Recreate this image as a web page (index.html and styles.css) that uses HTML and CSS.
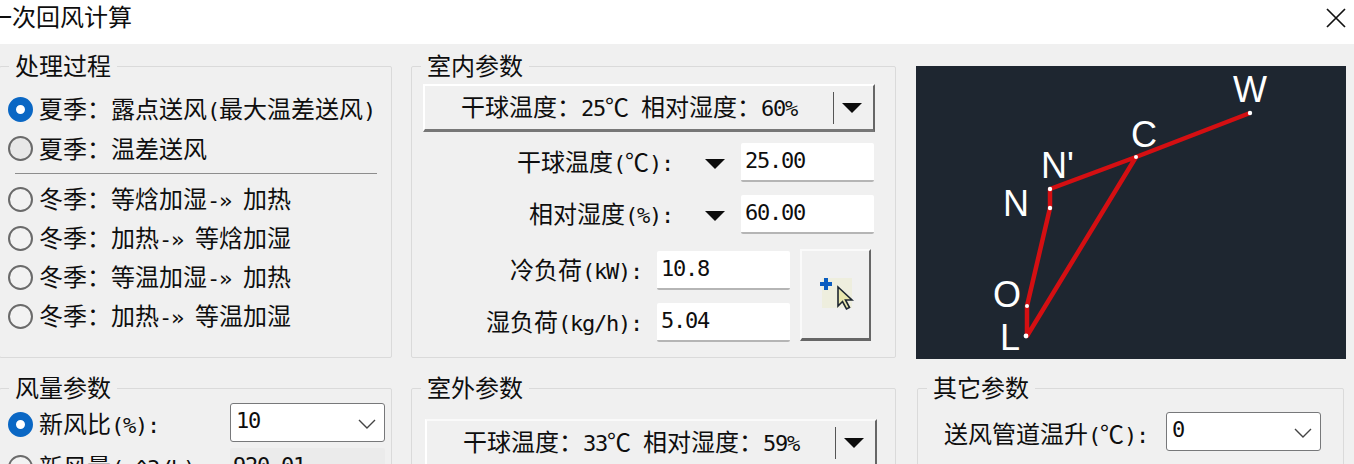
FILE: index.html
```html
<!DOCTYPE html>
<html lang="zh">
<head>
<meta charset="utf-8">
<title>一次回风计算</title>
<link rel="stylesheet" href="styles.css">
</head>
<body>
<header class="titlebar">
  <span class="title">一次回风计算</span>
  <svg class="close" width="20" height="20" viewBox="0 0 20 20"><path d="M1 1 19 19M19 1 1 19" stroke="#111" stroke-width="1.7" fill="none"/></svg>
</header>
<main class="grid">
  <fieldset class="panel">
    <legend>处理过程</legend>
    <div class="radios">
      <div class="radio-row"><span class="radio on"></span><span>夏季：露点送风<span class="l">(</span>最大温差送风<span class="l">)</span></span></div>
      <div class="radio-row"><span class="radio dim"></span><span>夏季：温差送风</span></div>
      <div class="sep"></div>
      <div class="radio-row"><span class="radio"></span><span>冬季：等焓加湿<span class="l">-» </span>加热</span></div>
      <div class="radio-row"><span class="radio"></span><span>冬季：加热<span class="l">-» </span>等焓加湿</span></div>
      <div class="radio-row"><span class="radio"></span><span>冬季：等温加湿<span class="l">-» </span>加热</span></div>
      <div class="radio-row"><span class="radio"></span><span>冬季：加热<span class="l">-» </span>等温加湿</span></div>
    </div>
  </fieldset>

  <fieldset class="panel">
    <legend>室内参数</legend>
    <div class="indoor">
      <div class="split">
        <span class="split-text">干球温度：<span class="l">25</span>℃<span class="l"> </span>相对湿度：<span class="l">60%</span></span>
        <span class="split-div"></span>
        <span class="tri"></span>
      </div>
      <div class="field-row">
        <span>干球温度<span class="l">(</span>℃<span class="l">):</span></span>
        <span class="tri tri-gap"></span>
        <div class="input">25.00</div>
      </div>
      <div class="field-row">
        <span>相对湿度<span class="l">(%):</span></span>
        <span class="tri tri-gap"></span>
        <div class="input">60.00</div>
      </div>
      <div class="load">
        <div class="load-fields">
          <div class="load-row"><span>冷负荷<span class="l">(kW):</span></span><div class="input">10.8</div></div>
          <div class="load-row"><span>湿负荷<span class="l">(kg/h):</span></span><div class="input">5.04</div></div>
        </div>
        <div class="pick">
          <svg width="40" height="40" viewBox="0 0 40 40">
            <rect x="6" y="3" width="30" height="30" fill="#eeeede"/>
            <path d="M8 3h4v4h4v4h-4v4H8v-4H4V7h4z" fill="#0b5cc0"/>
            <path d="M22 12v19l4.5-4.5 4 7.5 3-1.5-4-7.5h6.5z" fill="#e9e7ae" stroke="#1d2630" stroke-width="1.6"/>
          </svg>
        </div>
      </div>
    </div>
  </fieldset>

  <div class="diagram">
    <svg width="430" height="293" viewBox="0 0 430 293">
      <polyline points="334,47 220,91 134,123 134,142 111,240 111,270 220,91" fill="none" stroke="#d40f12" stroke-width="4.5" stroke-linejoin="round"/>
      <g fill="#fff">
        <circle cx="334" cy="47" r="2.2"/>
        <circle cx="220" cy="91" r="2"/>
        <circle cx="134" cy="123" r="2.2"/>
        <circle cx="134" cy="142" r="2.2"/>
        <circle cx="111" cy="240" r="2"/>
        <circle cx="110" cy="270" r="2.4"/>
      </g>
      <g class="pt">
        <text x="317" y="36">W</text>
        <text x="215" y="81">C</text>
        <text x="125" y="112">N'</text>
        <text x="87" y="150">N</text>
        <text x="77" y="241">O</text>
        <text x="84" y="284">L</text>
      </g>
    </svg>
  </div>

  <fieldset class="panel">
    <legend>风量参数</legend>
    <div class="air">
      <div class="air-row air-first">
        <div class="radio-row"><span class="radio on"></span><span>新风比<span class="l">(%):</span></span></div>
        <div class="select">10<svg class="chev" width="18" height="10" viewBox="0 0 18 10"><path d="M1 1 9 9 17 1" fill="none" stroke="#444" stroke-width="1.4"/></svg></div>
      </div>
      <div class="air-row">
        <div class="radio-row"><span class="radio"></span><span>新风量<span class="l">(m^3/h):</span></span></div>
        <div class="input disabled">920.01</div>
      </div>
    </div>
  </fieldset>

  <fieldset class="panel">
    <legend>室外参数</legend>
    <div class="outdoor">
      <div class="split">
        <span class="split-text">干球温度：<span class="l">33</span>℃<span class="l"> </span>相对湿度：<span class="l">59%</span></span>
        <span class="split-div"></span>
        <span class="tri"></span>
      </div>
    </div>
  </fieldset>

  <fieldset class="panel panel-other">
    <legend>其它参数</legend>
    <div class="other">
      <span class="other-label">送风管道温升<span class="l">(</span>℃<span class="l">):</span></span>
      <div class="select">0<svg class="chev" width="18" height="10" viewBox="0 0 18 10"><path d="M1 1 9 9 17 1" fill="none" stroke="#444" stroke-width="1.4"/></svg></div>
    </div>
  </fieldset>
</main>
</body>
</html>
```
FILE: styles.css
```css
* { box-sizing: border-box; }
html, body {
  margin: 0;
  width: 1354px;
  height: 464px;
  overflow: hidden;
}
body {
  background: #f0f0f0;
  color: #0e0e0e;
  font: 24px/1.2 "Noto Sans CJK SC", "Noto Sans", sans-serif;
}
.l, .input, .select {
  font-family: "DejaVu Sans Mono", "Liberation Mono", monospace;
  font-size: 22px;
  letter-spacing: -1.24px;
  white-space: pre;
}
.titlebar {
  height: 44px;
  background: #fff;
  display: flex;
  align-items: center;
  justify-content: space-between;
  padding-right: 8px;
}
.title {
  margin-left: -12px;
  margin-top: -11px;
  white-space: nowrap;
}
.close { margin-top: -8px; }

.grid {
  display: grid;
  grid-template-columns: 393px 484px 430px;
  grid-template-rows: 306px 150px;
  column-gap: 20px;
  row-gap: 16px;
  margin-left: -1px;
  padding-top: 8px;
}
.grid > :nth-child(2), .grid > :nth-child(5) { margin-left: -1px; }

.panel {
  margin: 0;
  padding: 0;
  min-width: 0;
  border: 1px solid #dadada;
  border-radius: 2px;
}
.panel legend {
  margin-left: 9px;
  padding: 0 6px 2px;
  height: 28px;
  line-height: 26px;
}
.panel-other {
  margin-left: 1px;
  margin-right: 2px;
}

.radios { padding: 10px 0 0 8px; }
.radio-row {
  height: 39px;
  display: flex;
  align-items: center;
  gap: 6px;
  white-space: nowrap;
}
.radio {
  flex: none;
  width: 25px;
  height: 25px;
  border-radius: 50%;
  border: 2px solid #6a6a6a;
  background: #f2f2f2;
}
.radio.dim { background: #e8e8e8; }
.radio.on {
  border: 8px solid #0a67c4;
  background: #fff;
}
.sep {
  height: 1px;
  width: 362px;
  margin: 5px 0 6px 7px;
  background: #8d8d8d;
}

.indoor { padding: 4px 0 0 11px; }
.split {
  height: 48px;
  width: 452px;
  display: flex;
  align-items: center;
  padding-left: 36px;
  background: #f0f0f0;
  border-top: 2px solid #fff;
  border-left: 2px solid #fff;
  border-right: 2px solid #666;
  border-bottom: 3px solid #777;
  white-space: nowrap;
}
.split-text { flex: 1; }
.split-div {
  width: 1px;
  height: 32px;
  background: #555;
  margin-right: 8px;
}
.split .tri { margin-right: 11px; }
.tri {
  flex: none;
  width: 0;
  height: 0;
  border-left: 10px solid transparent;
  border-right: 10px solid transparent;
  border-top: 10px solid #0c0c0c;
}
.field-row {
  display: flex;
  align-items: center;
  justify-content: flex-end;
  width: 451px;
  margin-top: 13px;
  height: 39px;
}
.split + .field-row { margin-top: 11px; }
.tri-gap { margin: 2px 16px 0 32px; }
.input {
  width: 133px;
  height: 39px;
  line-height: 36px;
  padding-left: 4px;
  background: #fff;
  border-bottom: 2px solid #b5b5b5;
  border-radius: 2px;
}
.load {
  display: flex;
  justify-content: flex-end;
  gap: 10px;
  width: 448px;
  margin-top: 15px;
}
.load-fields {
  display: flex;
  flex-direction: column;
  gap: 13px;
  padding-top: 2px;
}
.load-row {
  display: flex;
  align-items: center;
  justify-content: flex-end;
  gap: 15px;
  white-space: nowrap;
}
.pick {
  width: 71px;
  height: 92px;
  display: flex;
  align-items: center;
  justify-content: center;
  border-top: 2px solid #fafafa;
  border-left: 2px solid #fafafa;
  border-right: 2px solid #666;
  border-bottom: 3px solid #666;
}

.diagram {
  background: #1e2630;
  height: 293px;
  margin-top: 14px;
}
.diagram svg { display: block; }
.pt {
  font: 36px "Liberation Sans", sans-serif;
  fill: #fff;
}

.air { padding: 1px 6px 0 8px; }
.air-row {
  display: flex;
  align-items: center;
  justify-content: space-between;
  height: 39px;
}
.air-first {
  align-items: flex-start;
  height: 45px;
}
.air-first .radio-row { height: 42px; }
.select {
  position: relative;
  width: 155px;
  height: 39px;
  line-height: 33px;
  padding-left: 5px;
  background: #fff;
  border: 1.5px solid #77787a;
  border-radius: 3px;
  flex: none;
}
.chev {
  position: absolute;
  right: 8px;
  top: 15px;
}
.input.disabled {
  width: 155px;
  padding-left: 3px;
  background: #ebebeb;
  border: 0;
}

.outdoor { padding: 17px 0 0 13px; }
.outdoor .split { border-top-color: #fafafa; }

.other {
  display: flex;
  align-items: flex-start;
  padding: 10px 0 0 26px;
  white-space: nowrap;
}
.other-label { margin-top: 7px; }
.other .select { margin-left: 18px; line-height: 34px; }
```
